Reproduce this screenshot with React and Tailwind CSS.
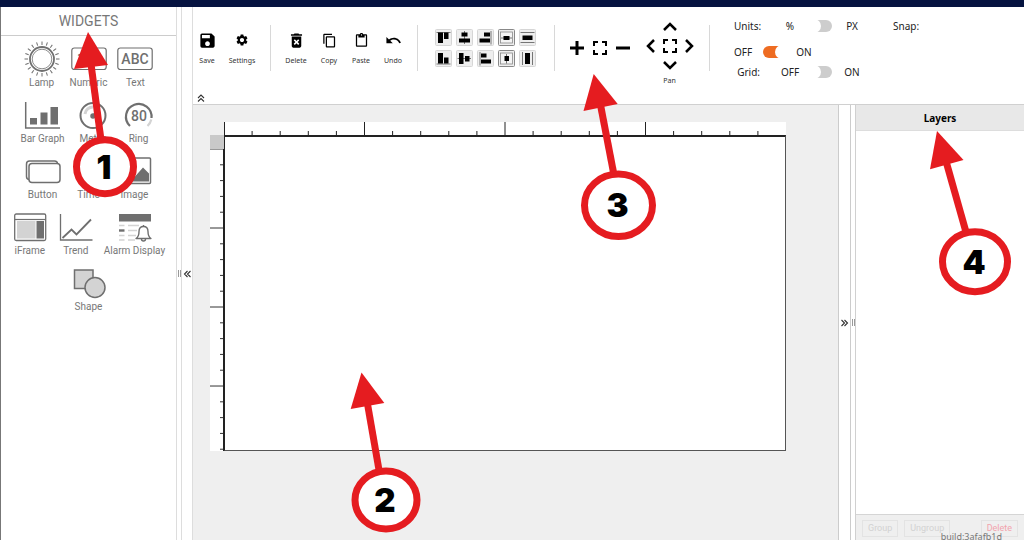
import React from "react";
import {
  MdSave,
  MdSettings,
  MdDeleteForever,
  MdContentCopy,
  MdContentPaste,
  MdUndo,
} from "react-icons/md";

const INK = "#6f6f6f";
const PALE = "#d3d3d3";

function WidgetIcon({ children }) {
  return (
    <svg viewBox="0 0 36 36" className="size-9" fill="none" stroke={INK} strokeWidth="1.5" aria-hidden="true">
      {children}
    </svg>
  );
}

function IconText({ y, children }) {
  return (
    <text x="18" y={y} textAnchor="middle" fontSize="14" fontWeight="500" fontFamily="Roboto, sans-serif" fill={INK} stroke="none">
      {children}
    </text>
  );
}

const RAYS = Array.from({ length: 20 }, (_, i) => i * 18);

const WIDGETS = [
  {
    name: "Lamp",
    icon: (
      <>
        <circle cx="18" cy="18" r="12" strokeWidth="1.8" />
        <circle cx="18" cy="18" r="9.8" strokeWidth="0.8" />
        {RAYS.map((a) => (
          <line key={a} x1="18" y1="4" x2="18" y2="0.5" strokeWidth="1" transform={`rotate(${a} 18 18)`} />
        ))}
      </>
    ),
  },
  {
    name: "Numeric",
    icon: (
      <>
        <rect x="0.8" y="7" width="34.4" height="21.5" rx="2.5" strokeWidth="1.2" />
        <IconText y="22.500">123</IconText>
      </>
    ),
  },
  {
    name: "Text",
    icon: (
      <>
        <rect x="0.8" y="7" width="34.4" height="21.5" rx="2.5" strokeWidth="1.2" />
        <IconText y="22.500">ABC</IconText>
      </>
    ),
  },
  {
    name: "Bar Graph",
    icon: (
      <>
        <path d="M1.7 5V31H36" />
        <path d="M6 21h7v6.500h-7zM16.500 15.500h7v12h-7zM26.500 10h7.500v17.500h-7.500z" fill={INK} stroke="none" />
      </>
    ),
  },
  {
    name: "Meter",
    icon: (
      <>
        <circle cx="18" cy="18.500" r="12.500" strokeWidth="2" />
        <path d="M10 17a8 8 0 0 1 8-7" stroke={PALE} strokeWidth="3" />
        <path d="M18 19l5-8" />
        <circle cx="18" cy="19" r="2" fill={INK} />
      </>
    ),
  },
  {
    name: "Ring",
    icon: (
      <>
        <path d="M9 29A12.800 12.800 0 1 1 30.500 21" strokeWidth="2.200" />
        <path d="M30.300 22.500A12.800 12.800 0 0 1 26.500 29" stroke={PALE} strokeWidth="2.200" />
        <IconText y="23.500">80</IconText>
      </>
    ),
  },
  {
    name: "Button",
    icon: (
      <>
        <rect x="1.500" y="8" width="31" height="18.500" rx="3" />
        <rect x="4" y="10.500" width="31" height="19" rx="3" fill="white" />
      </>
    ),
  },
  {
    name: "Time",
    icon: (
      <>
        <circle cx="20" cy="18" r="11" />
        <path d="M20 11v7l5 3" />
      </>
    ),
  },
  {
    name: "Image",
    icon: (
      <>
        <rect x="3" y="5" width="30.500" height="25.500" rx="1" />
        <path d="M5 28.500v-4l7-6 6 5 8-9 6 6v8z" fill={INK} stroke="none" />
      </>
    ),
  },
  {
    name: "iFrame",
    icon: (
      <>
        <rect x="2.700" y="5" width="31" height="26.500" rx="1.500" strokeWidth="1.300" />
        <path d="M3 10.500h30.500" strokeWidth="1.200" />
        <path d="M5 12h18.500v17.500h-18.500z" fill={PALE} stroke="none" />
        <path d="M24.500 12h7.500v17.500h-7.500z" fill={INK} stroke="none" />
      </>
    ),
  },
  {
    name: "Trend",
    icon: (
      <>
        <path d="M2.500 5V31H34.500" strokeWidth="1.300" />
        <path d="M4.500 29L13.500 20.500l5 5L33 10.500" strokeWidth="1.800" />
      </>
    ),
  },
  {
    name: "Alarm Display",
    icon: (
      <>
        <path d="M2 5h32v7.500h-32z" fill={INK} stroke="none" />
        <path d="M2 16.500h5.500M2 26.500h5.500M2 31h5.500M11 16.500h11M11 21.500h9M11 26.500h8M11 31h7" stroke={PALE} />
        <path d="M2 21.500h5.500" strokeWidth="2.400" />
        <path d="M19 29.500c2.500-1.500 3-3.500 3-7 0-3 1.500-5 4.500-5s4.500 2 4.500 5c0 3.500.5 5.500 3 7z" fill="white" strokeWidth="1.400" strokeLinejoin="round" />
        <path d="M24.500 30a2 2 0 0 0 4 0M26.500 17.500v-1.500" strokeWidth="1.400" />
      </>
    ),
  },
  {
    name: "Shape",
    icon: (
      <>
        <rect x="3.500" y="5" width="18.500" height="18.500" fill={PALE} />
        <circle cx="24" cy="22.500" r="10" fill={PALE} />
      </>
    ),
  },
];

function Tool({ label, width, children }) {
  return (
    <button type="button" className={`mt-[15px] flex flex-col items-center gap-2 ${width}`}>
      <span className="flex h-4 items-center">{children}</span>
      <span className="text-[7px] leading-[10px] text-[#333]">{label}</span>
    </button>
  );
}

function Rule({ gap }) {
  return <div className={`mt-2 h-[46px] w-px shrink-0 bg-[#d8d8d8] ${gap}`} />;
}

const ALIGN = [
  { name: "Align top", line: "M1.500 3.500h14", fill: "M3 3.500h5v10.500h-5zM9 3.500h4.500v6.500h-4.500z" },
  { name: "Align center", line: "M8.500 2v13", fill: "M5.500 3.500h6v4h-6zM3 9.500h11v4h-11z" },
  { name: "Align right", line: "M14 2v13.500", fill: "M7 3.500h6v4h-6zM2.500 9.500h10.500v4h-10.500z" },
  { name: "Center horizontally", framed: true, line: "M3 9h11", fill: "M5.500 7h6v4h-6z" },
  { name: "Distribute vertically", line: "M1.500 3.500h14M1.500 13.500h14", fill: "M3.500 6.500h10v4.500h-10z" },
  { name: "Align bottom", line: "M1.500 14h14", fill: "M3 3h5v10.500h-5zM9 7.500h4.500v6h-4.500z" },
  { name: "Align middle", line: "M1.500 8.500h13.500", fill: "M3 3h4.500v11h-4.500zM9 6h4.500v5.500h-4.500z" },
  { name: "Align left", line: "M3 2v13.500", fill: "M4 3.500h5.500v4h-5.500zM4 9.500h10v4h-10z" },
  { name: "Center vertically", framed: true, line: "M8.500 4v9.500", fill: "M6.500 6h4.500v5h-4.500z" },
  { name: "Distribute horizontally", line: "M3.500 2v13M13.500 2v13", fill: "M6 3h5v11h-5z" },
];

function AlignButton({ name, line, fill, framed }) {
  return (
    <button type="button" aria-label={name} className="size-[17px]">
      <svg viewBox="0 0 17 17" className="size-[17px]" fill="none">
        <rect x="0.500" y="0.500" width="16" height="16" rx="1" fill="#eee" stroke={framed ? "#888" : "#d6d6d6"} />
        {framed && <rect x="2.500" y="3" width="12" height="11" fill="#f4f4f4" stroke="#888" strokeWidth="0.800" />}
        <path d={line} stroke="#666" strokeWidth="0.900" />
        <path d={fill} fill="black" />
      </svg>
    </button>
  );
}

function IconButton({ label, d, weight = 2 }) {
  return (
    <button type="button" aria-label={label} className="flex items-center justify-center">
      <svg viewBox="0 0 16 16" className="size-4" fill="none" stroke="black" strokeWidth={weight}>
        <path d={d} />
      </svg>
    </button>
  );
}

const BRACKETS = "M2 6V2h4M10 2h4v4M14 10v4h-4M6 14H2v-4";

function Toggle({ label, on }) {
  return (
    <input
      type="checkbox"
      role="switch"
      aria-label={label}
      defaultChecked={on}
      className="relative h-3 w-[22px] appearance-none rounded-full bg-[#cdcdcd] before:absolute before:-top-px before:-left-[3px] before:size-[14px] before:rounded-full before:bg-white checked:bg-[#ee6c22] checked:before:left-3"
    />
  );
}

function Chevrons({ direction }) {
  const d = {
    left: "M4.500 1L1.500 4l3 3M7.500 1L4.500 4l3 3",
    right: "M0.500 1L3.500 4 0.500 7M3.500 1L6.500 4 3.500 7",
    up: "M1 4L4 1 7 4M1 7.500L4 4.500 7 7.500",
  }[direction];
  return (
    <svg viewBox="0 0 8 8" className="size-2" fill="none" stroke="#333" strokeWidth="1.100" aria-hidden="true">
      <path d={d} />
    </svg>
  );
}

function Grip() {
  return (
    <div className="flex w-1 items-center justify-center gap-px">
      <span className="h-[7px] w-px bg-[#999]" />
      <span className="h-[7px] w-px bg-[#999]" />
    </div>
  );
}

function TopRuler() {
  return (
    <svg className="h-[13px] w-full bg-white" aria-hidden="true">
      {Array.from({ length: 20 }, (_, i) => (
        <line key={i} x1={`${i * 5}%`} x2={`${i * 5}%`} y1={i % 5 ? 9 : 0} y2="13" stroke="#222" strokeWidth={i ? 1 : 2} />
      ))}
    </svg>
  );
}

function SideRuler() {
  return (
    <svg className="w-full flex-1 bg-white" aria-hidden="true">
      {Array.from({ length: 20 }, (_, i) => (
        <line key={i} y1={`${i * 5.23}%`} y2={`${i * 5.23}%`} x1={i % 5 ? 10 : 0} x2="14" stroke="#333" />
      ))}
      <line x1="13.500" x2="13.500" y1="0" y2="100%" stroke="#222" />
    </svg>
  );
}

const CALLOUTS = [
  { n: 1, cx: 105, cy: 166.700, rx: 28.500, ry: 27, head: "88,32 74,69 108,65", shaft: [91, 64, 101, 140] },
  { n: 2, cx: 386, cy: 500, rx: 31, ry: 29, head: "361.500,372.500 350.700,409 384.300,403", shaft: [367.500, 404, 379, 470] },
  { n: 3, cx: 618.500, cy: 205.300, rx: 34, ry: 31.200, head: "593.700,74 583.500,111 617.700,104", shaft: [600.700, 106, 614, 175] },
  { n: 4, cx: 975, cy: 261.700, rx: 32.500, ry: 30, head: "937,131 930,169.300 963.500,160", shaft: [946.500, 163, 966, 232] },
];

function Callouts() {
  return (
    <svg className="pointer-events-none absolute top-0 left-0 h-[540px] w-[1024px]">
      {CALLOUTS.map((c) => (
        <g key={c.n}>
          <line x1={c.shaft[0]} y1={c.shaft[1]} x2={c.shaft[2]} y2={c.shaft[3]} stroke="#e51c20" strokeWidth="7" />
          <polygon points={c.head} fill="#e51c20" />
          <ellipse cx={c.cx} cy={c.cy} rx={c.rx} ry={c.ry} fill="white" stroke="#e51c20" strokeWidth="7" />
          <text x={c.cx - 1} y={c.cy + 12} textAnchor="middle" fontSize="33" fontWeight="900" fontFamily="Inter, sans-serif" fill="black">
            {c.n}
          </text>
        </g>
      ))}
    </svg>
  );
}

export default function App() {
  return (
    <div className="relative flex h-screen flex-col overflow-hidden bg-white font-['Noto_Sans',sans-serif] text-[10px] text-[#222]">
      <header className="h-[7px] shrink-0 bg-[#051340]" />
      <div className="flex min-h-0 flex-1">
        <aside className="w-[177px] shrink-0 border-r border-l border-r-[#ddd] border-l-[#777] font-[Roboto,sans-serif] text-[#777]">
          <h2 className="h-[29px] border-b border-[#ccc] text-center text-sm leading-7">WIDGETS</h2>
          <div className="flex flex-wrap justify-center gap-x-[10px] gap-y-2 px-1 pt-[5px]">
            {WIDGETS.map((w) => (
              <button key={w.name} type="button" className="flex flex-col items-center">
                <WidgetIcon>{w.icon}</WidgetIcon>
                <span className="text-[10px] leading-3">{w.name}</span>
              </button>
            ))}
          </div>
        </aside>
        <Grip />
        <button type="button" aria-label="Collapse widgets" className="flex w-3 shrink-0 items-center justify-center border-x border-[#ddd]">
          <Chevrons direction="left" />
        </button>

        <div className="flex min-w-0 flex-1 flex-col">
          <div className="flex h-[98px] shrink-0 flex-col justify-between border-b border-[#d0d0d0]">
            <div className="flex items-start pt-[10px]">
              <Tool label="Save" width="w-7"><MdSave size={19} color="black" /></Tool>
              <Tool label="Settings" width="w-[42px]"><MdSettings size={14} color="black" /></Tool>
              <Rule gap="ml-[7px]" />
              <div className="ml-2 flex">
                <Tool label="Delete" width="w-[34px]"><MdDeleteForever size={19} color="black" /></Tool>
                <Tool label="Copy" width="w-8"><MdContentCopy size={15} color="black" /></Tool>
                <Tool label="Paste" width="w-8"><MdContentPaste size={15} color="black" /></Tool>
                <Tool label="Undo" width="w-8"><MdUndo size={17} color="black" /></Tool>
              </div>
              <Rule gap="ml-2" />
              <div className="mt-3 ml-[17px] grid shrink-0 grid-cols-5 gap-1">
                {ALIGN.map((a) => <AlignButton key={a.name} {...a} />)}
              </div>
              <Rule gap="ml-[18px]" />
              <div className="mt-[23px] ml-[14px] flex gap-[7px]">
                <IconButton label="Zoom in" weight={3} d="M8 1v14M1 8h14" />
                <IconButton label="Fit" d={BRACKETS} />
                <IconButton label="Zoom out" weight={3} d="M1 8h14" />
              </div>
              <div className="ml-[10px] flex flex-col items-center">
                <div className="grid grid-cols-[19px_19px_19px] grid-rows-[19px_19px_19px]">
                  <span />
                  <IconButton label="Pan up" weight={2.5} d="M2 11l6-6 6 6" />
                  <span />
                  <IconButton label="Pan left" weight={2.5} d="M11 2L5 8l6 6" />
                  <IconButton label="Center view" d={BRACKETS} />
                  <IconButton label="Pan right" weight={2.5} d="M5 2l6 6-6 6" />
                  <span />
                  <IconButton label="Pan down" weight={2.5} d="M2 5l6 6 6-6" />
                  <span />
                </div>
                <span className="mt-0.5 text-[7px] leading-[10px] text-[#333]">Pan</span>
              </div>
              <Rule gap="ml-[11px]" />
              <div className="ml-6 flex flex-col leading-[18px]">
                <div className="flex items-center">
                  <span className="w-[26px] text-right">Units:</span>
                  <span className="ml-3 w-9 text-center">%</span>
                  <span className="mx-0.5 flex"><Toggle label="Units in pixels" /></span>
                  <span className="w-9 text-center">PX</span>
                  <span className="ml-[23px]">Snap:</span>
                </div>
                <div className="mt-2 flex items-center gap-[11px]">
                  <span>OFF</span>
                  <Toggle label="Snap" on />
                  <span>ON</span>
                </div>
                <div className="mt-0.5 flex items-center">
                  <span className="w-[26px] text-right">Grid:</span>
                  <span className="ml-3 w-9 text-center">OFF</span>
                  <span className="mx-0.5 flex"><Toggle label="Grid" /></span>
                  <span className="w-9 text-center">ON</span>
                </div>
              </div>
            </div>
            <button type="button" aria-label="Collapse toolbar" className="mb-0.5 ml-1 self-start">
              <Chevrons direction="up" />
            </button>
          </div>

          <div className="flex min-h-0 flex-1">
            <main className="min-w-0 flex-1 bg-[#efefef] pt-[17px] pr-[52px] pl-[17px]">
              <div className="grid grid-cols-[14px_1fr]">
                <span />
                <TopRuler />
                <div className="flex flex-col">
                  <div className="h-[14px] bg-[#c9c9c9]" />
                  <SideRuler />
                </div>
                <div className="aspect-video border border-t-2 border-[#555] border-t-[#222] border-l-[#222] bg-white" />
              </div>
            </main>
            <button type="button" aria-label="Collapse layers" className="flex w-[13px] shrink-0 items-center justify-center border-x border-[#ccc]">
              <Chevrons direction="right" />
            </button>
            <Grip />
            <aside className="flex w-[169px] shrink-0 flex-col border-l border-[#d0d0d0]">
              <h2 className="h-[26px] border-b border-[#ddd] bg-[#e8e8e8] text-center text-[10px] leading-[26px] font-bold text-black">Layers</h2>
              <div className="flex-1" />
              <div className="flex h-[26px] items-center gap-1.5 border-t border-[#d5d5d5] bg-[#efefef] px-1.5 pt-0.5 font-[Roboto,sans-serif] text-[9px] leading-[15px]">
                <button type="button" className="border border-[#e3e3e3] px-[5px] text-[#d2d2d2]">Group</button>
                <button type="button" className="border border-[#e3e3e3] px-[5px] text-[#d2d2d2]">Ungroup</button>
                <button type="button" className="ml-auto border border-[#e3e3e3] px-[5px] text-[#f2a3ad]">Delete</button>
              </div>
            </aside>
          </div>
        </div>
      </div>
      <span className="absolute right-[22px] -bottom-1 text-[9px] leading-[14px] text-[#777]">build:3afafb1d</span>
      <Callouts />
    </div>
  );
}
